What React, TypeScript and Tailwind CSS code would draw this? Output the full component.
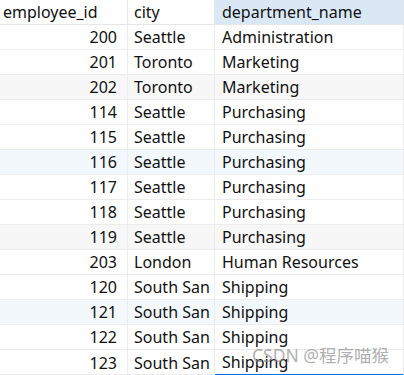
// App.tsx
/* Query result grid: employee_id / city / department_name */

type Row = { id: number; city: string; dept: string; tone?: "gray" | "blue" };

const rows: Row[] = [
  { id: 200, city: "Seattle", dept: "Administration" },
  { id: 201, city: "Toronto", dept: "Marketing" },
  { id: 202, city: "Toronto", dept: "Marketing", tone: "gray" },
  { id: 114, city: "Seattle", dept: "Purchasing" },
  { id: 115, city: "Seattle", dept: "Purchasing" },
  { id: 116, city: "Seattle", dept: "Purchasing", tone: "blue" },
  { id: 117, city: "Seattle", dept: "Purchasing" },
  { id: 118, city: "Seattle", dept: "Purchasing" },
  { id: 119, city: "Seattle", dept: "Purchasing", tone: "gray" },
  { id: 203, city: "London", dept: "Human Resources" },
  { id: 120, city: "South San", dept: "Shipping" },
  { id: 121, city: "South San", dept: "Shipping", tone: "blue" },
  { id: 122, city: "South San", dept: "Shipping" },
  { id: 123, city: "South San", dept: "Shipping" },
];

const App = () => {
  return (
    <div
      className="relative w-[404px] h-[375px] overflow-hidden bg-white text-[16px] text-[#111]"
      style={{ fontFamily: '"Noto Sans", "Noto Sans CJK SC", sans-serif' }}
    >
      {/* header */}
      <div className="grid grid-cols-[128px_87px_1fr] h-[25px] border-b border-[#e6e6e6]">
        <div className="flex items-center pl-[3px] border-r border-[#e6e6e6]">employee_id</div>
        <div className="flex items-center pl-[6px] border-r border-[#e6e6e6]">city</div>
        <div className="flex items-center pl-[7px] bg-[#dae8f6] border-r border-[#e6e6e6]">
          department_name
        </div>
      </div>

      {/* rows */}
      {rows.map((row, i) => {
        const bg =
          row.tone === "gray" ? "bg-[#f7f7f7]" : row.tone === "blue" ? "bg-[#f3f8fd]" : "bg-white";
        const last = i === rows.length - 1;
        return (
          <div
            key={i}
            className={`grid grid-cols-[128px_87px_1fr] h-[25px] border-b border-[#ececec] ${bg}`}
          >
            <div className="flex items-center justify-end pr-[10px] border-r border-[#ececec]">
              {row.id}
            </div>
            <div className="flex items-center pl-[6px] whitespace-nowrap overflow-hidden border-r border-[#ececec]">
              {row.city}
            </div>
            <div
              className={`flex items-center pl-[7px] border-r border-[#ececec] ${
                last ? "border-b-2 border-b-[#0a6fd6]" : ""
              }`}
            >
              {row.dept}
            </div>
          </div>
        );
      })}

      {/* watermark */}
      <div className="absolute left-[252px] top-[342px] text-[17.5px] text-[#8c8c8c]/70 whitespace-nowrap">
        CSDN @程序喵猴
      </div>
    </div>
  );
};

export default App;
